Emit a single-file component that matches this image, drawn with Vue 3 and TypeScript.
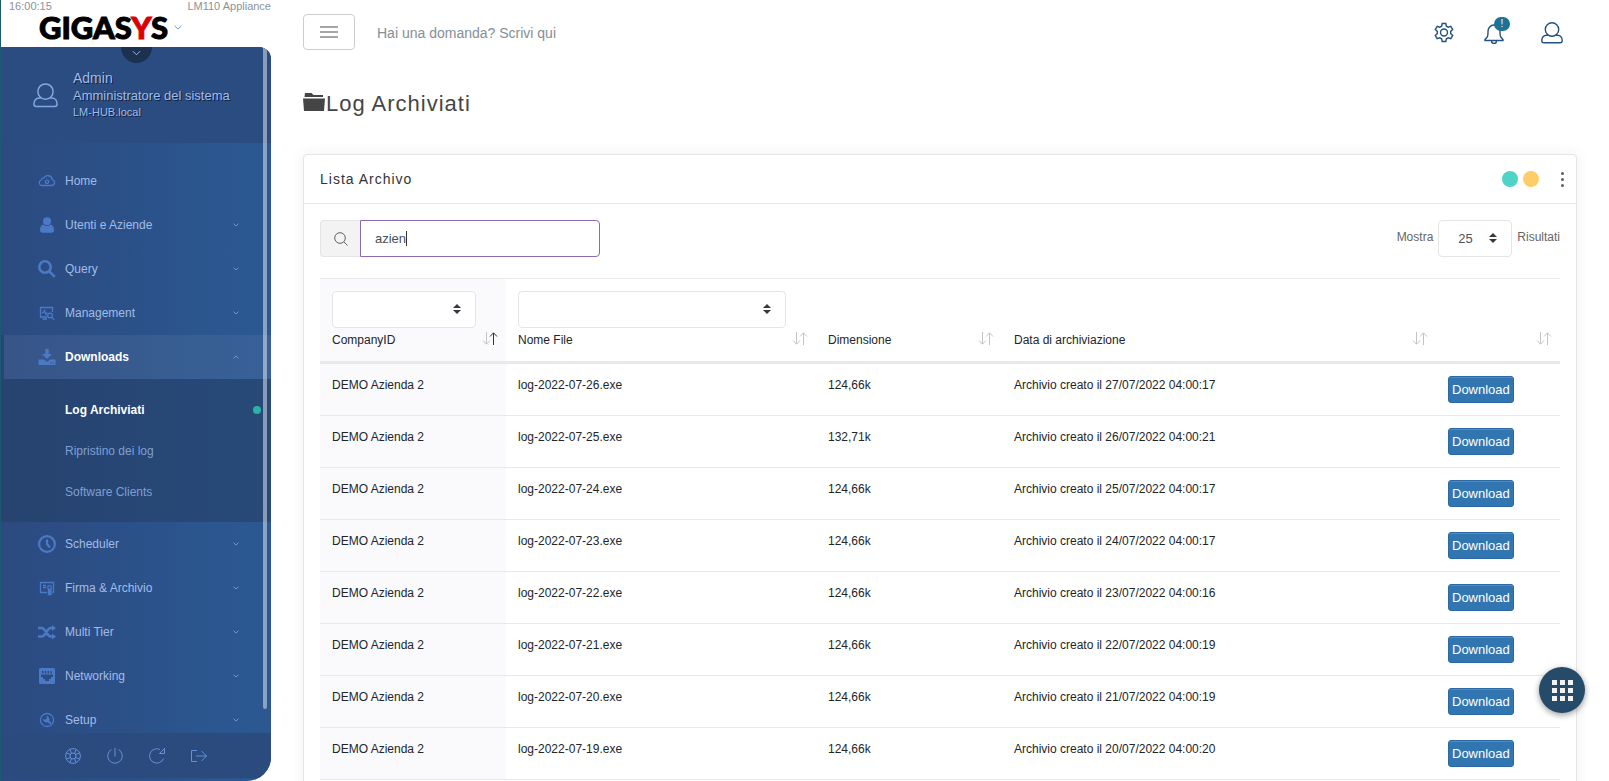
<script setup lang="ts">
import { ref } from 'vue'

interface MenuItem {
  id: string
  label: string
  icon: string
  expandable: boolean
  open?: boolean
  children?: string[]
}

interface LogRow {
  company: string
  file: string
  size: string
  archived: string
}

const menu: MenuItem[] = [
  { id: 'home', label: 'Home', icon: 'cloud', expandable: false },
  { id: 'users', label: 'Utenti e Aziende', icon: 'user', expandable: true },
  { id: 'query', label: 'Query', icon: 'search', expandable: true },
  { id: 'management', label: 'Management', icon: 'monitor', expandable: true },
  {
    id: 'downloads',
    label: 'Downloads',
    icon: 'download',
    expandable: true,
    open: true,
    children: ['Log Archiviati', 'Ripristino dei log', 'Software Clients'],
  },
  { id: 'scheduler', label: 'Scheduler', icon: 'clock', expandable: true },
  { id: 'firma', label: 'Firma & Archivio', icon: 'certificate', expandable: true },
  { id: 'tier', label: 'Multi Tier', icon: 'shuffle', expandable: true },
  { id: 'network', label: 'Networking', icon: 'ethernet', expandable: true },
  { id: 'setup', label: 'Setup', icon: 'wrench', expandable: true },
]

const rows: LogRow[] = [
  ['26', '124,66k', '27/07/2022 04:00:17'],
  ['25', '132,71k', '26/07/2022 04:00:21'],
  ['24', '124,66k', '25/07/2022 04:00:17'],
  ['23', '124,66k', '24/07/2022 04:00:17'],
  ['22', '124,66k', '23/07/2022 04:00:16'],
  ['21', '124,66k', '22/07/2022 04:00:19'],
  ['20', '124,66k', '21/07/2022 04:00:19'],
  ['19', '124,66k', '20/07/2022 04:00:20'],
].map(([day, size, date]) => ({
  company: 'DEMO Azienda 2',
  file: `log-2022-07-${day}.exe`,
  size,
  archived: `Archivio creato il ${date}`,
}))

const columns = [
  { label: 'CompanyID', filter: true, cls: 'w15', sorted: true },
  { label: 'Nome File', filter: true, cls: 'w25', sorted: false },
  { label: 'Dimensione', filter: false, cls: 'w15', sorted: false },
  { label: 'Data di archiviazione', filter: false, cls: 'w35', sorted: false },
  { label: '', filter: false, cls: 'w10', sorted: false },
]

const search = ref('azien')
const question = ref('')
</script>

<template>
  <div class="shell">
    <aside class="sidebar">
      <header class="brand">
        <div class="brand-info"><span>16:00:15</span><span>LM110 Appliance</span></div>
        <div class="brand-row">
          <span class="logo">GIGAS<span class="logo-red">Y</span>S</span>
          <svg class="brand-chevron" viewBox="0 0 8 5" aria-hidden="true"><path d="M.5.8 4 4 7.5.8" /></svg>
        </div>
      </header>

      <div class="panel">
        <button class="toggle" type="button" aria-label="Profilo">
          <svg viewBox="0 0 10 6" aria-hidden="true"><path d="M1 1l4 4 4-4" /></svg>
        </button>
        <section class="profile">
          <svg class="profile-icon" viewBox="0 0 22 22" aria-hidden="true">
            <circle cx="11" cy="7.500" r="6.700" />
            <path d="M7 13.200H5.500C2.500 13.200.8 15.700.8 18.500c0 1.600.8 2.200 2.200 2.200h16c1.400 0 2.200-.6 2.200-2.200 0-2.800-1.700-5.300-4.700-5.300H15" />
          </svg>
          <div class="profile-text">
            <span class="profile-name">Admin</span>
            <span class="profile-role">Amministratore del sistema</span>
            <span class="profile-host">LM-HUB.local</span>
          </div>
        </section>

        <nav class="nav">
          <template v-for="item in menu" :key="item.id">
            <a href="#" class="nav-item" :class="{ active: item.open }">
              <svg v-if="item.icon === 'cloud'" class="ico line" viewBox="0 0 18 18">
                <path d="M5 13.500h8.500a3 3 0 0 0 .8-5.900A4.500 4.500 0 0 0 6 5.800 3.500 3.500 0 0 0 3.200 8 2.900 2.900 0 0 0 5 13.500z" />
                <circle cx="9" cy="9.800" r="1.700" />
              </svg>
              <svg v-else-if="item.icon === 'user'" class="ico fill" viewBox="0 0 18 18">
                <circle cx="9" cy="5.200" r="4" />
                <path d="M5.500 8.500C7.500 10.500 10.500 10.500 12.500 8.500 15 9 16 11.500 16 14c0 2-1 2.700-2.500 2.700h-9C3 16.700 2 16 2 14c0-2.500 1-5 3.500-5.500z" />
              </svg>
              <svg v-else-if="item.icon === 'search'" class="ico heavy" viewBox="0 0 18 18">
                <circle cx="7" cy="7" r="5.700" /><path d="M11.300 11.300l5.500 5.500" />
              </svg>
              <svg v-else-if="item.icon === 'monitor'" class="ico line" viewBox="0 0 18 18">
                <path d="M9 13H2.500V3.500h12V8M4.500 15h4.500M4 8.500h1.500l1-2 1.500 4 1-2" />
                <circle cx="12" cy="11.500" r="2.300" /><path d="M13.700 13.200l2.500 2.500" />
              </svg>
              <svg v-else-if="item.icon === 'download'" class="ico fill" viewBox="0 0 18 18">
                <path d="M7.300 1h3.400v5H14L9 11 4 6h3.300z" />
                <path fill-rule="evenodd" d="M.5 11.500h5.300L9 14l3.200-2.500h5.300V17H.5zM12 14.300v1.200h1.200v-1.200zm2.500 0v1.200h1.200v-1.200z" />
              </svg>
              <svg v-else-if="item.icon === 'clock'" class="ico bold" viewBox="0 0 18 18">
                <circle cx="9" cy="9" r="7.900" /><path d="M9 4.500V9l3 3.500" />
              </svg>
              <svg v-else-if="item.icon === 'certificate'" class="ico line" viewBox="0 0 18 18">
                <path d="M9 13.500H2.500v-10h13v10h-1M5 6.500h3M5 8.500h3" />
                <circle cx="11.500" cy="8.500" r="1.800" /><path d="M10.500 11v4.500h2.500V11z" fill="currentColor" />
              </svg>
              <svg v-else-if="item.icon === 'shuffle'" class="ico heavy" viewBox="0 0 18 18">
                <path d="M0 5h3.500c4.500 0 5 8.500 9.500 8.500h2M0 13.500h3.500c4.500 0 5-8.500 9.500-8.500h2" />
                <path class="solid" d="M14 2l4 3-4 3zM14 10.500l4 3-4 3z" />
              </svg>
              <svg v-else-if="item.icon === 'ethernet'" class="ico fill" viewBox="0 0 18 18">
                <path fill-rule="evenodd" d="M2.500 1h13A1.500 1.500 0 0 1 17 2.500v13a1.500 1.500 0 0 1-1.500 1.500h-13A1.500 1.500 0 0 1 1 15.500v-13A1.500 1.500 0 0 1 2.500 1zM3 7.500V10h2v2h2v2h4v-2h2v-2h2V7.500zM4 4v2.500h1.500V4zm2.800 0v2.500h1.500V4zm2.800 0v2.500h1.500V4zm2.800 0v2.500h1.500V4z" />
              </svg>
              <svg v-else class="ico line" viewBox="0 0 18 18">
                <circle cx="9" cy="9" r="6.500" />
                <path class="thick" d="M9.500 9.500l3.300 3.300" />
                <path class="solid" d="M8.200 4.800L9 7.200 7.200 8.800 4.900 8a3.600 3.600 0 0 0 5.600 2.800A3.600 3.600 0 0 0 8.200 4.800z" />
              </svg>
              <span class="nav-label">{{ item.label }}</span>
              <svg v-if="item.expandable" class="chev" :class="{ up: item.open }" viewBox="0 0 6 4" aria-hidden="true">
                <path d="M.5.7 3 3 5.500.7" />
              </svg>
            </a>
            <div v-if="item.children" class="submenu">
              <a v-for="(child, i) in item.children" :key="child" href="#" class="sub-item" :class="{ current: i === 0 }">
                {{ child }}<i v-if="i === 0" class="dot"></i>
              </a>
            </div>
          </template>
        </nav>

        <footer class="side-footer">
          <button type="button" aria-label="Supporto">
            <svg viewBox="0 0 16 16"><circle cx="8" cy="8" r="7.400" /><circle cx="8" cy="8" r="3" /><path d="M5 1.500l1.500 4M11 1.500l-1.500 4M5 14.500l1.500-4M11 14.500l-1.500-4M1.500 5l4 1.500M1.500 11l4-1.500M14.500 5l-4 1.500M14.500 11l-4-1.500" /></svg>
          </button>
          <button type="button" aria-label="Spegni">
            <svg viewBox="0 0 16 16"><path d="M8 0v8.500M4.500 1.500a7.300 7.300 0 1 0 7 0" /></svg>
          </button>
          <button type="button" aria-label="Riavvia">
            <svg viewBox="0 0 16 16"><path d="M14.500 10.500A7.200 7.200 0 1 1 11 1.500M15.500.5v5h-5zM10.500 5.500l5-5" /></svg>
          </button>
          <button type="button" aria-label="Esci">
            <svg viewBox="0 0 16 16"><path d="M6 2.500H.5v11H6M5 8h10.500M10.500 3l5 5-5 5" /></svg>
          </button>
        </footer>
        <div class="scroll-thumb"></div>
      </div>
    </aside>

    <main class="main">
      <header class="topbar">
        <button class="burger" type="button" aria-label="Menu"><i></i><i></i><i></i></button>
        <input v-model="question" class="question" type="text" aria-label="Domanda" placeholder="Hai una domanda? Scrivi qui" />
        <div class="top-actions">
          <button type="button" aria-label="Impostazioni">
            <svg viewBox="0 0 22 22">
              <path d="M9.200 1.500h3.600l.6 2.700 1.800 1 2.600-.9 1.900 3.200-2 1.900v2.200l2 1.900-1.900 3.200-2.600-.9-1.800 1-.6 2.700H9.200l-.6-2.700-1.800-1-2.600.9-1.900-3.200 2-1.900V9.400l-2-1.900 1.900-3.200 2.600.9 1.800-1z" />
              <circle cx="11" cy="10.500" r="3.500" />
            </svg>
          </button>
          <button type="button" aria-label="Notifiche">
            <svg viewBox="0 0 22 22">
              <path d="M2 18.500v-1l2.200-2.500c.8-1 .8-3 .8-5.500C5 6 7.500 3 11 3s6 3 6 6.500c0 2.500 0 4.500.8 5.500l2.200 2.500v1zM8.500 19a2.500 2.500 0 0 0 5 0" />
            </svg>
            <span class="badge">!</span>
          </button>
          <button type="button" aria-label="Utente">
            <svg viewBox="0 0 22 22">
              <circle cx="11" cy="7.500" r="6.700" />
              <path d="M7 13.200H5.500C2.500 13.200.8 15.700.8 18.500c0 1.600.8 2.200 2.200 2.200h16c1.400 0 2.200-.6 2.200-2.200 0-2.800-1.700-5.300-4.700-5.300H15" />
            </svg>
          </button>
        </div>
      </header>

      <h1 class="title">
        <svg viewBox="0 0 22 18" aria-hidden="true">
          <path d="M2 0h6.500l2 2H20v2H1.500z" /><path d="M0 5.500h22L21 18H1z" />
        </svg>
        <span>Log Archiviati</span>
      </h1>

      <section class="card">
        <header class="card-head">
          <h2>Lista Archivo</h2>
          <div class="card-tools">
            <button class="disc teal" type="button" aria-label="Aggiorna"></button>
            <button class="disc amber" type="button" aria-label="Riduci"></button>
            <button class="kebab" type="button" aria-label="Opzioni"><i></i><i></i><i></i></button>
          </div>
        </header>
        <div class="card-body">
          <div class="filters">
            <div class="search">
              <label class="addon" for="search" aria-label="Cerca">
                <svg viewBox="0 0 14 14"><circle cx="6" cy="6" r="5.300" /><path d="M9.800 9.800l3.700 3.700" /></svg>
              </label>
              <div class="search-field">
                <input id="search" v-model="search" type="text" />
                <i class="caret"></i>
              </div>
            </div>
            <div class="length">
              <label class="length-text" for="length">Mostra</label>
              <span class="select-wrap len">
                <select id="length"><option>25</option><option>50</option></select>
                <svg viewBox="0 0 8 10" aria-hidden="true"><path d="M4 0l4 4H0zM4 10l4-4H0z" /></svg>
              </span>
              <span class="length-text">Risultati</span>
            </div>
          </div>

          <table>
            <thead>
              <tr>
                <th v-for="(c, i) in columns" :key="i" :class="c.cls">
                  <span v-if="c.filter" class="select-wrap">
                    <select :aria-label="c.label"><option></option></select>
                    <svg viewBox="0 0 8 10" aria-hidden="true"><path d="M4 0l4 4H0zM4 10l4-4H0z" /></svg>
                  </span>
                  <div class="th-label">{{ c.label }}</div>
                  <svg class="sort" :class="{ asc: c.sorted }" viewBox="0 0 16 13" aria-hidden="true">
                    <path class="down" d="M4.500 0v12M1 8.500l3.500 3.700L8 8.500" />
                    <path class="rise" d="M11.500 13V1M8 4.500L11.500.8 15 4.500" />
                  </svg>
                </th>
              </tr>
            </thead>
            <tbody>
              <tr v-for="r in rows" :key="r.file">
                <td>{{ r.company }}</td>
                <td>{{ r.file }}</td>
                <td>{{ r.size }}</td>
                <td>{{ r.archived }}</td>
                <td><button class="download" type="button">Download</button></td>
              </tr>
            </tbody>
          </table>
        </div>
      </section>
    </main>

    <button class="fab" type="button" aria-label="Applicazioni"><i v-for="n in 9" :key="n"></i></button>
  </div>
</template>

<style>
body {
  margin: 0;
  background: #fff;
}
</style>

<style scoped>
* {
  box-sizing: border-box;
}
.shell {
  display: flex;
  height: 100vh;
  overflow: hidden;
  border-left: 1px solid #1b5a70;
  font-family: 'Liberation Sans', Arial, sans-serif;
  font-size: 12px;
  color: #212529;
}
button {
  padding: 0;
  border: 0;
  background: none;
  color: inherit;
  font-family: inherit;
  cursor: pointer;
}
svg {
  display: block;
  fill: none;
  stroke: currentColor;
}
a {
  text-decoration: none;
}

/* sidebar */
.sidebar {
  display: flex;
  flex-direction: column;
  flex: none;
  width: 270px;
}
.brand {
  height: 47px;
}
.brand-info {
  display: flex;
  justify-content: space-between;
  height: 13px;
  padding-left: 8px;
  font-size: 11px;
  line-height: 13px;
  color: #8b9299;
}
.brand-row {
  display: flex;
  align-items: center;
  gap: 6px;
  height: 28px;
  padding-left: 38px;
}
.logo {
  font-family: Lato, 'Liberation Sans', sans-serif;
  font-size: 31px;
  font-weight: 900;
  line-height: 28px;
  color: #000;
  -webkit-text-stroke: 1px currentColor;
}
.logo-red {
  color: #dc0000;
}
.brand-chevron {
  width: 8px;
  height: 5px;
  color: #6a97e0;
}
.panel {
  position: relative;
  display: flex;
  flex-direction: column;
  flex: 1;
  min-height: 0;
  overflow: hidden;
  padding-bottom: 3px;
  border-radius: 0 12px 24px 0;
  background: linear-gradient(90deg, #2b4b80 0%, #2b5088 45%, #2b558d 70%, #2c5892 100%);
}
.toggle {
  position: absolute;
  top: -16px;
  left: 120px;
  display: flex;
  justify-content: center;
  align-items: flex-end;
  width: 31px;
  height: 32px;
  padding-bottom: 7px;
  border-radius: 50%;
  background: #1c3150;
  color: #a9c4f0;
}
.toggle svg {
  width: 9px;
  height: 6px;
}
.profile {
  display: flex;
  flex: none;
  align-items: center;
  gap: 15px;
  height: 96px;
  padding-left: 32px;
  background: #2b4c80;
  color: #9fbdf0;
}
.profile-icon {
  width: 25px;
  height: 25px;
  stroke-width: 1.3;
  color: #83a7e4;
}
.profile-text {
  display: flex;
  flex-direction: column;
  line-height: 17px;
  text-shadow: 1px 1px 0 rgba(0, 0, 0, 0.6);
}
.profile-name {
  font-size: 14px;
}
.profile-role {
  font-size: 13px;
}
.profile-host {
  font-size: 11px;
}
.nav {
  flex: 1;
  min-height: 0;
  overflow: hidden;
  padding-top: 16px;
}
.nav-item {
  display: flex;
  align-items: center;
  height: 44px;
  padding: 0 32px 0 34px;
  border-left: 3px solid transparent;
  color: #a2bce6;
}
.nav-item.active {
  border-left-color: #284572;
  background: rgba(255, 255, 255, 0.06);
  background-clip: padding-box;
  color: #fff;
  font-weight: 700;
}
.nav-label {
  flex: 1;
  margin-left: 9px;
}
.ico {
  width: 18px;
  height: 18px;
  color: #4a7ac6;
}
.ico.line {
  stroke-width: 1.3;
}
.ico.line .thick {
  stroke-width: 2;
}
.ico.fill {
  fill: currentColor;
  stroke: none;
}
.ico.bold {
  stroke-width: 2.2;
}
.ico.heavy {
  stroke-width: 2.6;
}
.ico .solid {
  fill: currentColor;
  stroke: none;
}
.chev {
  width: 6px;
  height: 4px;
  color: #6e98dc;
}
.chev.up {
  transform: rotate(180deg);
}
.submenu {
  height: 143px;
  padding-top: 10px;
  background: rgba(35, 60, 95, 0.5);
}
.sub-item {
  display: flex;
  align-items: center;
  justify-content: space-between;
  height: 41px;
  padding: 0 10px 0 64px;
  color: #7f9fd3;
}
.sub-item.current {
  color: #fff;
  font-weight: 700;
}
.dot {
  width: 8px;
  height: 8px;
  border-radius: 50%;
  background: #28b4a5;
}
.side-footer {
  display: flex;
  flex: none;
  align-items: center;
  gap: 26px;
  height: 45px;
  padding-left: 64px;
  background: #2b4b7f;
  color: #6690d8;
}
.side-footer svg {
  width: 16px;
  height: 16px;
}
.scroll-thumb {
  position: absolute;
  top: 0;
  right: 4px;
  bottom: 72px;
  width: 4px;
  border-radius: 0 0 2px 2px;
  background: rgba(255, 255, 255, 0.45);
}

/* main area */
.main {
  flex: 1;
  min-width: 0;
  overflow-y: auto;
  scrollbar-width: none;
  padding: 0 32px;
}
.topbar {
  display: flex;
  align-items: center;
  height: 66px;
}
.burger {
  display: flex;
  flex-direction: column;
  align-items: center;
  justify-content: center;
  gap: 3px;
  width: 52px;
  height: 36px;
  margin-bottom: 2px;
  border: 1px solid #ccc;
  border-radius: 4px;
}
.burger i {
  width: 18px;
  height: 2px;
  background: #a6a6a6;
}
.question {
  flex: 1;
  min-width: 0;
  height: 36px;
  padding: 0 22px;
  border: 0;
  outline: 0;
  font-family: inherit;
  font-size: 14px;
}
.question::placeholder {
  color: #868e96;
  opacity: 1;
}
.top-actions {
  display: flex;
  gap: 28px;
  align-items: center;
  margin-right: 14px;
  color: #24527f;
}
.top-actions button {
  position: relative;
}
.top-actions button:last-child {
  margin-left: 8px;
}
.top-actions svg {
  width: 22px;
  height: 22px;
  stroke-width: 1.4;
}
.badge {
  position: absolute;
  top: -5px;
  right: -5px;
  width: 16px;
  height: 14px;
  border-radius: 8px;
  background: #1d7295;
  color: #fff;
  font-size: 10px;
  line-height: 14px;
  text-align: center;
}
.title {
  display: flex;
  align-items: center;
  gap: 1px;
  height: 32px;
  margin: 22px 0 34px;
  color: #454545;
  font-size: 22px;
  font-weight: 400;
  letter-spacing: 1px;
  line-height: 32px;
}
.title svg {
  width: 22px;
  height: 18px;
  margin-bottom: 4px;
  fill: currentColor;
  stroke: none;
}
.card {
  min-height: 660px;
  border: 1px solid #e5e5e5;
  border-radius: 4px;
  background: #fff;
  box-shadow: 0 0 13px rgba(74, 53, 107, 0.08);
}
.card-head {
  display: flex;
  align-items: center;
  justify-content: space-between;
  height: 49px;
  padding: 0 10px 0 16px;
  border-bottom: 1px solid #e8e8e8;
}
.card-head h2 {
  margin: 0;
  font-size: 14px;
  font-weight: 400;
  letter-spacing: 1px;
  color: #333;
}
.card-tools {
  display: flex;
  align-items: center;
  gap: 5px;
}
.disc {
  width: 16px;
  height: 16px;
  border-radius: 50%;
}
.teal {
  background: #4dd4c6;
}
.amber {
  background: #ffcd67;
}
.kebab {
  display: flex;
  flex-direction: column;
  align-items: center;
  gap: 3px;
  width: 8px;
  margin-left: 14px;
}
.kebab i {
  width: 3px;
  height: 3px;
  border-radius: 50%;
  background: #5d5d66;
}
.card-body {
  padding: 16px;
}
.filters {
  display: flex;
  justify-content: space-between;
  margin-bottom: 21px;
}
.search {
  display: flex;
  width: 280px;
  height: 37px;
}
.addon {
  display: flex;
  align-items: center;
  justify-content: center;
  width: 40px;
  border: 1px solid #e5e5e5;
  border-right: 0;
  border-radius: 4px 0 0 4px;
  background: #f3f3f3;
  color: #5d6066;
}
.addon svg {
  width: 14px;
  height: 14px;
}
.search-field {
  position: relative;
  flex: 1;
}
.search input {
  width: 100%;
  height: 100%;
  padding: 0 14px;
  border: 1px solid #886ab5;
  border-radius: 0 4px 4px 0;
  outline: 0;
  color: #495057;
  font-family: inherit;
  font-size: 13px;
}
.caret {
  position: absolute;
  top: 11px;
  left: 46px;
  width: 1px;
  height: 15px;
  background: #333;
}
.length {
  display: flex;
  align-items: center;
  gap: 5px;
  color: #666;
}
.length-text {
  padding-bottom: 3px;
}
.select-wrap {
  position: relative;
  display: block;
  height: 37px;
}
.select-wrap.len {
  width: 74px;
}
.select-wrap select {
  display: block;
  width: 100%;
  height: 100%;
  padding: 0 19px;
  appearance: none;
  border: 1px solid #e5e5e5;
  border-radius: 4px;
  background: #fff;
  color: #495057;
  font-family: inherit;
  font-size: 13px;
}
.select-wrap svg {
  position: absolute;
  top: 13px;
  right: 15px;
  width: 8px;
  height: 10px;
  fill: #343a40;
  stroke: none;
  pointer-events: none;
}
table {
  width: 100%;
  table-layout: fixed;
  border-collapse: separate;
  border-spacing: 0;
}
.w10 {
  width: 10%;
}
.w15 {
  width: 15%;
}
.w25 {
  width: 25%;
}
.w35 {
  width: 35%;
}
th {
  position: relative;
  padding: 12px 30px 10px 12px;
  border-top: 1px solid #e9e9e9;
  border-bottom: 3px solid #e9e9e9;
  font-weight: 400;
  text-align: left;
  vertical-align: bottom;
}
.th-label {
  height: 23px;
  line-height: 25px;
}
th:first-child,
td:first-child {
  background: #fafafd;
}
.sort {
  position: absolute;
  right: 8px;
  bottom: 16px;
  width: 16px;
  height: 13px;
  color: #c4c2c8;
}
.sort.asc .rise {
  stroke: #333;
}
td {
  height: 52px;
  padding: 12px 12px 0;
  border-bottom: 1px solid #e9e9e9;
  line-height: 18px;
  vertical-align: top;
}
.download {
  display: block;
  height: 27px;
  padding: 0 3px;
  border: 1px solid #2a69a3;
  border-radius: 3px;
  background: #3276b1;
  box-shadow: inset 0 1px 0 rgba(255, 255, 255, 0.15);
  color: #fff;
  font-size: 13px;
}
.fab {
  position: fixed;
  right: 24px;
  bottom: 68px;
  display: grid;
  grid-template-columns: repeat(3, 5px);
  gap: 3px;
  place-content: center;
  width: 46px;
  height: 46px;
  border-radius: 50%;
  background: #264a6a;
  box-shadow: 0 2px 6px rgba(0, 0, 0, 0.4);
}
.fab i {
  width: 5px;
  height: 5px;
  background: #f2f2f2;
}
</style>
